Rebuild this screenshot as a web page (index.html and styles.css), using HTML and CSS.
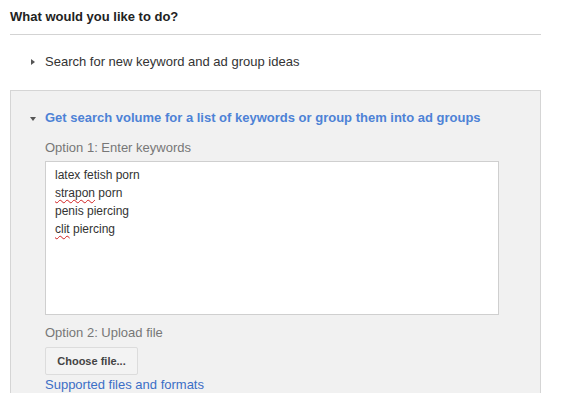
FILE: index.html
```html
<!DOCTYPE html>
<html lang="en">

<head>
    <meta charset="UTF-8">
    <title>Keyword Planner</title>
    <link rel="stylesheet" href="styles.css">
</head>

<body>
    <main class="planner">
        <!-- Heading -->
        <h1 class="planner-title">What would you like to do?</h1>

        <!-- Collapsed option -->
        <div class="option-row">
            <span class="arrow arrow-right"></span>
            <span>Search for new keyword and ad group ideas</span>
        </div>

        <!-- Expanded option -->
        <section class="option-panel">
            <div class="option-row option-open">
                <span class="arrow arrow-down"></span>
                <span>Get search volume for a list of keywords or group them into ad groups</span>
            </div>

            <div class="option-body">
                <p class="field-label">Option 1: Enter keywords</p>
                <div class="keyword-box">
                    <div>latex fetish porn</div>
                    <div><span class="misspelled">strapon</span> porn</div>
                    <div>penis piercing</div>
                    <div><span class="misspelled">clit</span> piercing</div>
                </div>

                <p class="field-label upload-label">Option 2: Upload file</p>
                <button class="file-btn">Choose file...</button>
                <a class="help-link" href="#">Supported files and formats</a>
            </div>
        </section>
    </main>
</body>

</html>
```

FILE: styles.css
```css
/* General Styles */
body {
    margin: 0;
    padding: 0;
    font-family: 'Liberation Sans', Arial, sans-serif;
    font-size: 13px;
    color: #333;
    background-color: #fff;
    overflow: hidden;
}

h1, p {
    margin: 0;
    padding: 0;
}

.planner {
    width: 531px;
    margin-left: 10px;
}

/* Heading */
.planner-title {
    font-size: 13px;
    line-height: 18px;
    font-weight: bold;
    color: #222;
    padding: 8px 0;
    border-bottom: 1px solid #d3d3d3;
}

/* Option rows */
.option-row {
    display: flex;
    align-items: center;
    line-height: 18px;
    margin-top: 18px;
    padding-left: 21px;
}

.arrow {
    width: 14px;
    height: 18px;
    position: relative;
    flex-shrink: 0;
}

.arrow::before {
    content: "";
    position: absolute;
    width: 0;
    height: 0;
}

.arrow-right::before {
    left: 0;
    top: 6px;
    border-top: 3.5px solid transparent;
    border-bottom: 3.5px solid transparent;
    border-left: 4px solid #555;
}

.arrow-down::before {
    left: -1px;
    top: 8px;
    border-left: 3px solid transparent;
    border-right: 3px solid transparent;
    border-top: 4px solid #555;
}

/* Expanded panel */
.option-panel {
    margin-top: 19px;
    background-color: #f1f1f1;
    border: 1px solid #d5d5d5;
    border-bottom: none;
    padding: 18px 0 0 20px;
}

.option-panel .option-row {
    margin-top: 0;
    padding-left: 0;
}

.option-open {
    color: #4d82d6;
    font-weight: bold;
}

.option-body {
    margin-left: 14px;
}

.field-label {
    color: #777;
    line-height: 18px;
    margin-top: 12px;
}

.keyword-box {
    width: 434px;
    height: 144px;
    margin-top: 4px;
    padding: 4px 9px;
    background-color: #fff;
    border: 1px solid #cfcfcf;
    font-size: 12px;
    line-height: 18px;
    color: #333;
}

.misspelled {
    text-decoration: underline wavy #d02020;
    text-decoration-thickness: 1px;
    text-underline-offset: 2px;
}

.upload-label {
    margin-top: 9px;
}

.file-btn {
    display: block;
    width: 93px;
    height: 28px;
    margin-top: 5px;
    padding: 0;
    font-family: 'Liberation Sans', Arial, sans-serif;
    font-size: 11px;
    font-weight: bold;
    color: #444;
    background-color: #f3f3f3;
    border: 1px solid #dcdcdc;
    border-radius: 2px;
}

.help-link {
    display: block;
    margin-top: 1px;
    line-height: 18px;
    color: #3b6ec6;
    text-decoration: none;
}
```
